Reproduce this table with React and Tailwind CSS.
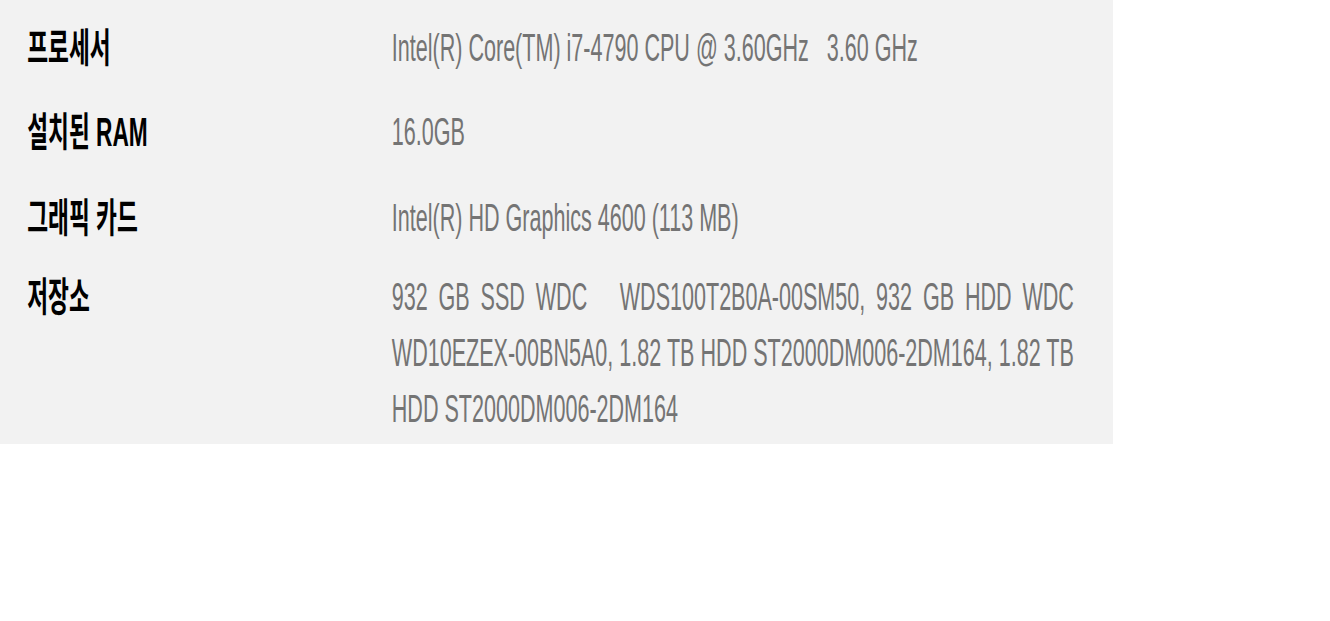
import React from "react";

// everything is laid out wide, then squeezed horizontally like the screenshot
const specs = [
  { label: "프로세서", value: "Intel(R) Core(TM) i7-4790 CPU @ 3.60GHz   3.60 GHz", gap: "mt-0" },
  { label: "설치된 RAM", value: "16.0GB", gap: "mt-[28px]" },
  { label: "그래픽 카드", value: "Intel(R) HD Graphics 4600 (113 MB)", gap: "mt-[30px]" },
];

const storageLines = [
  "932 GB SSD WDC   WDS100T2B0A-00SM50, 932 GB HDD WDC",
  "WD10EZEX-00BN5A0, 1.82 TB HDD ST2000DM006-2DM164, 1.82 TB",
];

const Row = ({ label, gap, children }) => (
  <div className={`flex ${gap}`}>
    <div className="w-[691px] pl-[48px] text-[40px] font-bold text-black">{label}</div>
    <div className="flex-1 text-[#747474]">{children}</div>
  </div>
);

export default function App() {
  return (
    <div className="h-[621px] w-full overflow-hidden bg-white">
      <div className="h-[444px] w-[1113px] overflow-hidden bg-[#f2f2f2]">
        <div className="w-[1963px] origin-top-left scale-x-[0.567] pt-[20px] text-[38px] leading-[56px] font-['Liberation_Sans','Noto_Sans_CJK_KR',sans-serif]">
          {specs.map((s) => (
            <Row key={s.label} label={s.label} gap={s.gap}>
              <span className="whitespace-pre">{s.value}</span>
            </Row>
          ))}
          <Row label="저장소" gap="mt-[23px]">
            <div className="w-[1203px]">
              {storageLines.map((line) => (
                <div
                  key={line}
                  className="whitespace-pre-wrap text-justify [text-align-last:justify]"
                >
                  {line}
                </div>
              ))}
              <div>HDD ST2000DM006-2DM164</div>
            </div>
          </Row>
        </div>
      </div>
    </div>
  );
}
